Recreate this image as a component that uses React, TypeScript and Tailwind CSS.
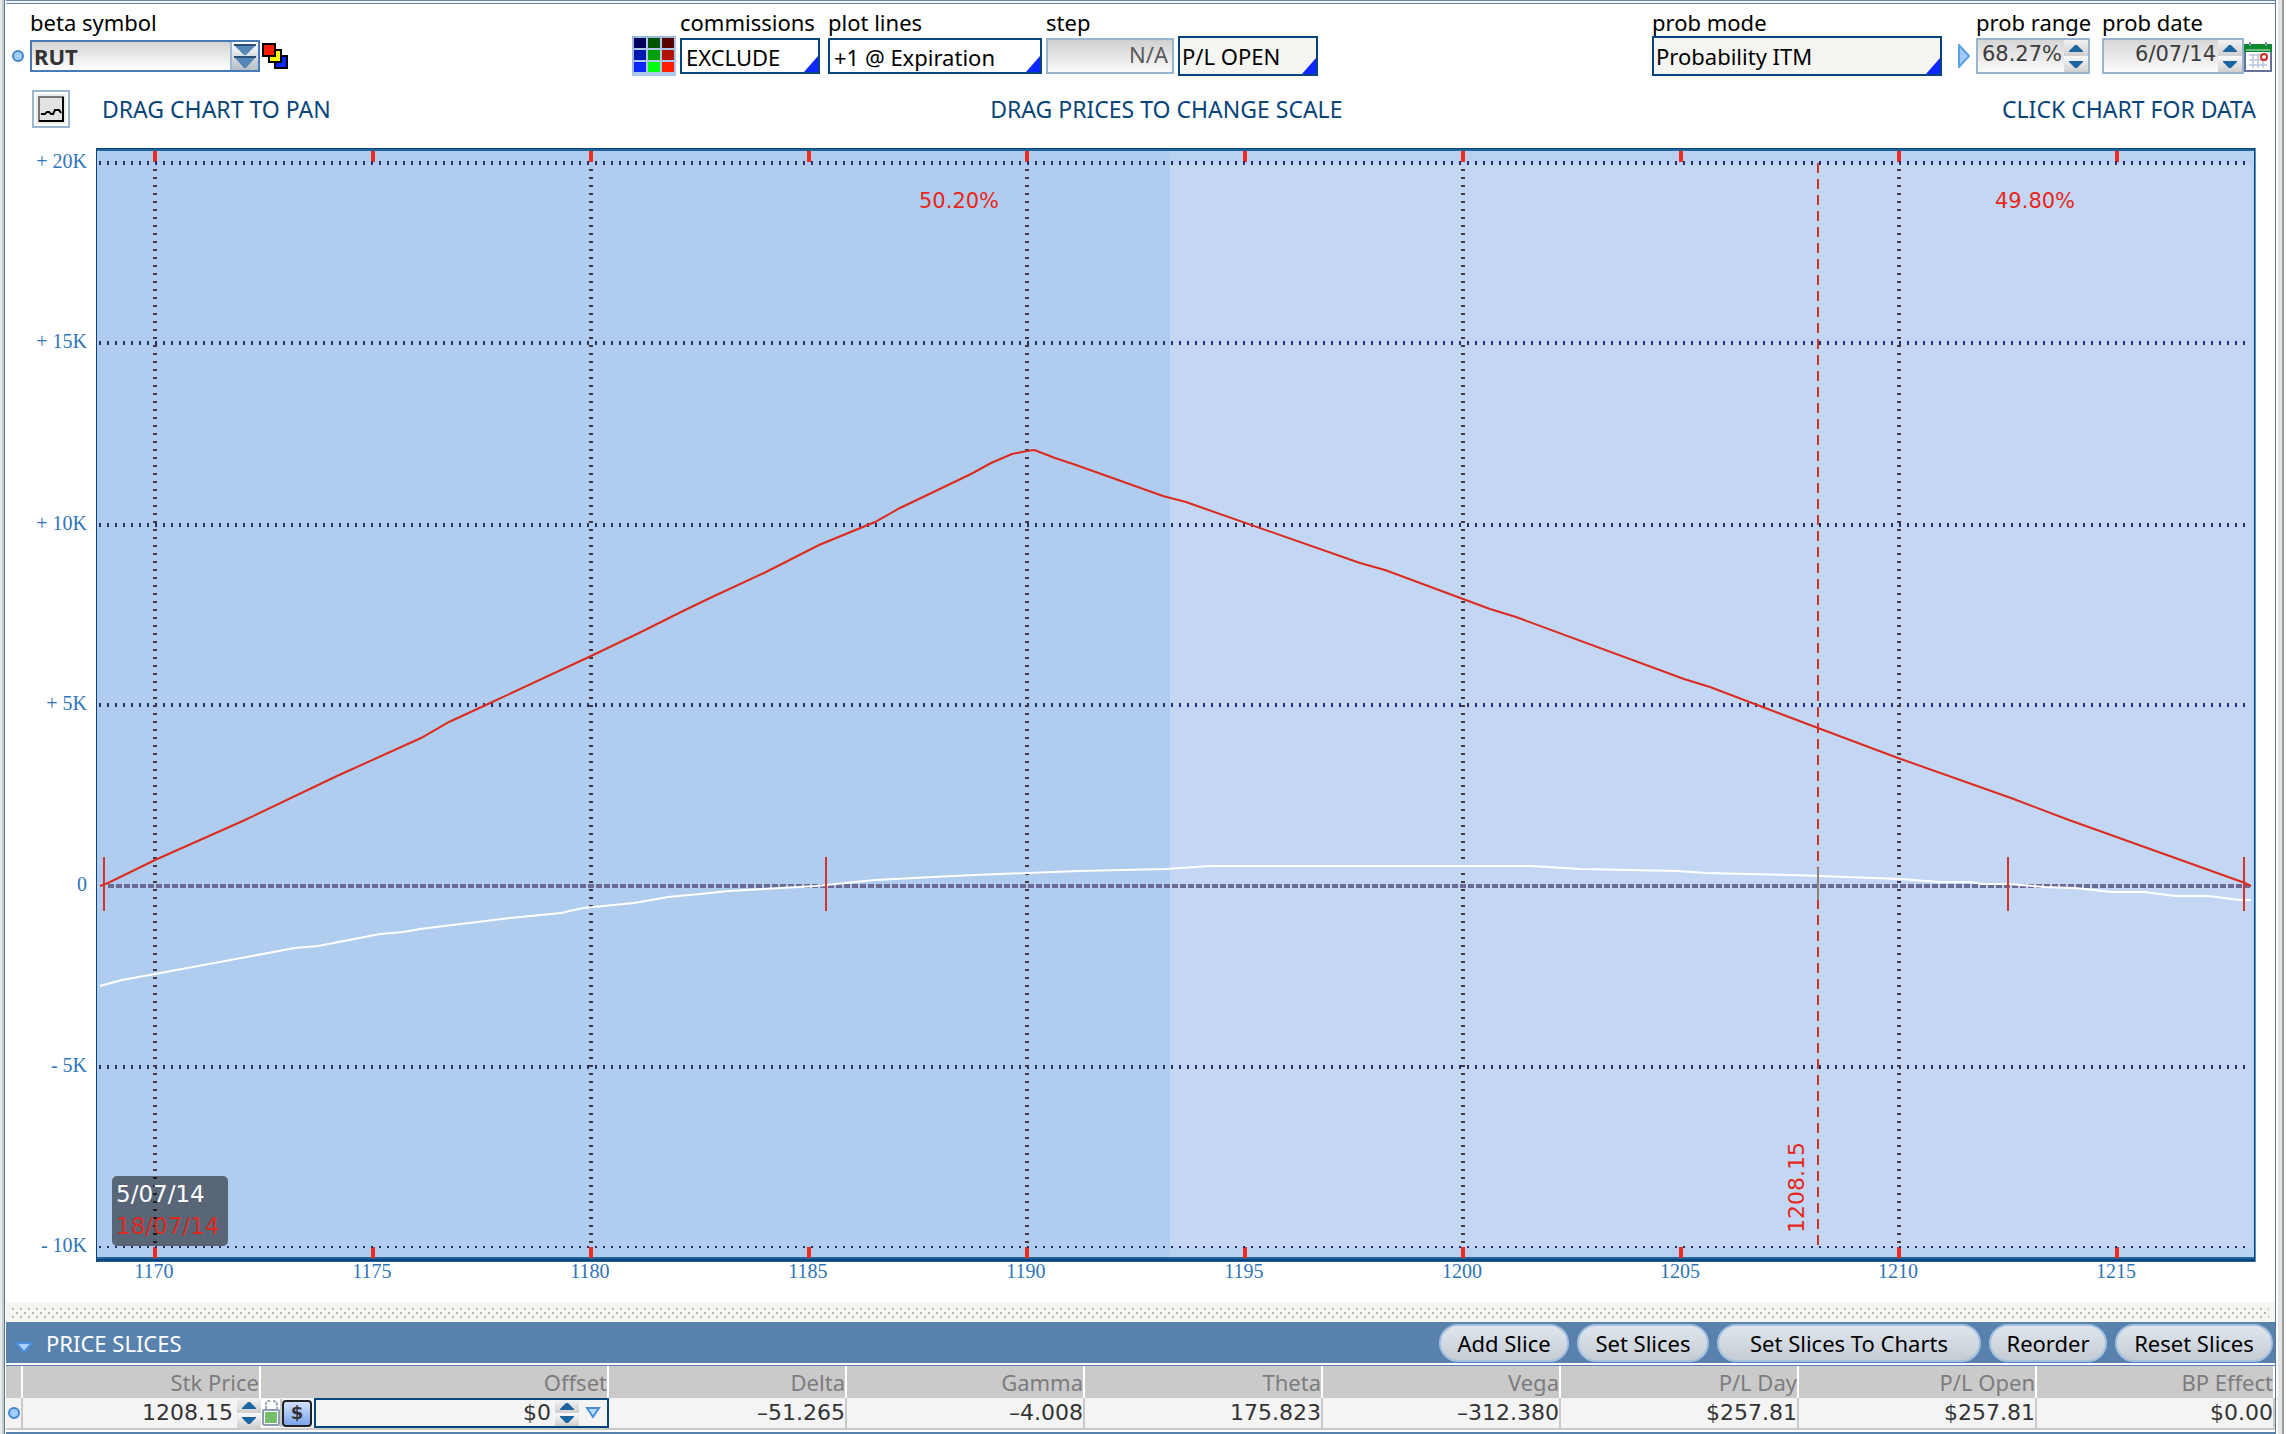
import { useState } from 'react';
import type { ReactNode } from 'react';

const yAxis = [
  { label: '+ 20K', y: 163 },
  { label: '+ 15K', y: 343 },
  { label: '+ 10K', y: 525 },
  { label: '+ 5K', y: 705 },
  { label: '0', y: 886 },
  { label: '- 5K', y: 1067 },
  { label: '- 10K', y: 1247 },
];

const xAxis = [1170, 1175, 1180, 1185, 1190, 1195, 1200, 1205, 1210, 1215];
const xOf = (price: number) => 155 + (price - 1170) * 43.6;

const expirationLine =
  '100,886 108,883 155,860 245,820 337,776 421,738 449,722 488,704 591,656 639,633 681,612 710,598 764,573 819,545 875,522 900,508 946,486 971,474 991,463 1012,454 1027,451 1034,450 1037,451 1055,458 1076,465 1163,496 1186,502 1200,507 1360,563 1385,570 1490,609 1516,617 1684,679 1710,687 1818,728 1898,758 2011,798 2069,820 2245,883 2251,886';
const todayLine =
  '100,986 122,980 155,974 295,948 318,946 380,934 403,932 420,929 510,918 561,913 583,908 634,903 668,897 700,894 729,891 816,886 875,880 933,877 974,875 1028,873 1079,871 1166,869 1210,866 1531,866 1580,869 1677,871 1706,873 1793,875 1900,879 1940,882 1971,882 1982,884 2008,884 2045,887 2075,888 2112,892 2144,892 2175,896 2208,896 2240,900 2251,900';

const breakevens = [104, 826, 2008, 2244];

const greeks = [
  { name: 'Delta', value: '–51.265' },
  { name: 'Gamma', value: '–4.008' },
  { name: 'Theta', value: '175.823' },
  { name: 'Vega', value: '–312.380' },
  { name: 'P/L Day', value: '$257.81' },
  { name: 'P/L Open', value: '$257.81' },
  { name: 'BP Effect', value: '$0.00' },
];

const sliceActions = [
  { label: 'Add Slice', width: 'w-[130px]' },
  { label: 'Set Slices', width: 'w-[132px]' },
  { label: 'Set Slices To Charts', width: 'w-[264px]' },
  { label: 'Reorder', width: 'w-[118px]' },
  { label: 'Reset Slices', width: 'w-[158px]' },
];

function Dot() {
  return <span className="block size-3 shrink-0 rounded-full border-2 border-[#3f86d0] bg-[#a3cdfb]" />;
}

function Field({ id, label, children }: { id: string; label: string; children: ReactNode }) {
  return (
    <div className="flex flex-col">
      <label htmlFor={id} className="h-7 w-0 whitespace-nowrap leading-7">
        {label}
      </label>
      <div className="flex h-10 items-center">{children}</div>
    </div>
  );
}

function CornerSelect({ id, value, className, label }: { id: string; value: string; className: string; label?: string }) {
  return (
    <div className="relative">
      <select
        id={id}
        aria-label={label}
        defaultValue={value}
        className={`block appearance-none border-2 border-[#08457a] text-black outline-none ${className}`}
      >
        <option>{value}</option>
      </select>
      <svg className="pointer-events-none absolute bottom-0.5 right-0.5" width="14" height="16" viewBox="0 0 14 16">
        <path d="M14 0V16H0Z" fill="#0a28ff" />
      </svg>
    </div>
  );
}

function Spinner({ name }: { name: string }) {
  return (
    <div className="flex h-full w-6 shrink-0 flex-col">
      <button aria-label={`Increase ${name}`} className="flex flex-1 items-center justify-center bg-linear-to-b from-[#f2f2f2] to-[#cfcfcf]">
        <svg width="14" height="7" viewBox="0 0 14 7">
          <path d="M6 0H8L14 6V7H0V6Z" fill="#1d65a0" />
        </svg>
      </button>
      <button aria-label={`Decrease ${name}`} className="flex flex-1 items-center justify-center bg-linear-to-b from-[#fafafa] to-[#cfcfcf]">
        <svg width="14" height="7" viewBox="0 0 14 7">
          <path d="M6 7H8L14 1V0H0V1Z" fill="#1d65a0" />
        </svg>
      </button>
    </div>
  );
}

function SpinField({ id, value, className }: { id: string; value: string; className: string }) {
  return (
    <div className={`flex h-9 border-2 border-[#9ab4d2] bg-linear-to-b from-[#d6d6d6] to-[#fbfbfb] ${className}`}>
      <input
        id={id}
        defaultValue={value}
        className="min-w-0 flex-1 pb-1 pr-0.5 text-right font-['DejaVu_Sans'] text-[21px] text-[#3c3c3c] outline-none"
      />
      <Spinner name={id} />
    </div>
  );
}

function PaletteIcon() {
  const cells = ['#00005a', '#005400', '#5a0000', '#0018b0', '#00a000', '#b01400', '#0a28ff', '#00ff10', '#ff2000'];
  return (
    <svg width="44" height="40" viewBox="0 0 44 40">
      <rect width="44" height="40" fill="#adc8ec" />
      <path d="M1 0V37M0 1H44" stroke="#8ea9cd" strokeWidth="1" />
      {cells.map((fill, i) => (
        <rect key={fill} x={2 + (i % 3) * 14} y={2 + Math.floor(i / 3) * 12} width="12" height="10" fill={fill} />
      ))}
    </svg>
  );
}

function CalendarIcon() {
  return (
    <svg width="28" height="30" viewBox="0 0 28 30">
      <rect x="1" y="7" width="26" height="22" fill="#fff" stroke="#68719e" strokeWidth="2" />
      <rect x="0" y="2" width="28" height="8" fill="#0a8a2c" />
      <path d="M2 8H26" stroke="#d7ecdc" strokeWidth="1" />
      <path d="M6 0V4M22 0V4" stroke="#8a8f9c" strokeWidth="2" />
      <path d="M5 13H23M5 18H23M5 23H23M9 12V26M14 12V26M19 12V26" stroke="#b9c3dc" strokeWidth="1.5" />
      <circle cx="20" cy="15" r="3" fill="#fff" stroke="#e0261c" strokeWidth="2" />
    </svg>
  );
}

function Toolbar() {
  return (
    <div className="flex items-start pt-1">
      <div className="flex w-[626px] shrink-0 items-start">
        <span className="w-6 pl-1.5 pt-[42px]">
          <Dot />
        </span>
        <Field id="symbol" label="beta symbol">
          <div className="flex h-8 w-[230px] border-2 border-[#467bb8] bg-linear-to-b from-[#d4d4d4] to-white">
            <input
              id="symbol"
              defaultValue="RUT"
              className="min-w-0 flex-1 pl-0.5 font-bold text-[#333] outline-none"
            />
            <button aria-label="Show symbols" className="w-7 shrink-0 border-l-2 border-[#9cb7d8] bg-linear-to-b from-white to-[#b8bec6]">
              <svg className="mx-auto" width="22" height="26" viewBox="0 0 22 26">
                <path d="M1 3H21L12 12H10Z M1 15H21L12 25H10Z" fill="#5587b8" />
                <path d="M0 2H22M0 14H22" stroke="#2c4f77" strokeWidth="2" />
              </svg>
            </button>
          </div>
          <svg className="ml-0.5" width="26" height="26" viewBox="0 0 26 26" stroke="#000" strokeWidth="2">
            <rect x="13" y="13" width="12" height="12" fill="#0a28ff" />
            <rect x="7" y="7" width="12" height="12" fill="#ff0" />
            <rect x="1" y="1" width="12" height="12" fill="#ff1e00" />
          </svg>
        </Field>
      </div>
      <button aria-label="Colors" className="mt-7 mr-1 shrink-0">
        <PaletteIcon />
      </button>
      <div className="flex gap-x-1">
        <div className="mr-1">
          <Field id="commissions" label="commissions">
            <CornerSelect id="commissions" value="EXCLUDE" className="h-9 w-[140px] bg-white pl-1 pt-0.5" />
          </Field>
        </div>
        <Field id="plot-lines" label="plot lines">
          <CornerSelect id="plot-lines" value="+1 @ Expiration" className="h-9 w-[214px] bg-white pl-1 pt-0.5" />
        </Field>
        <Field id="step" label="step">
          <input
            id="step"
            defaultValue="N/A"
            className="h-9 w-32 border-2 border-[#9ab4d2] bg-linear-to-b from-[#d0d0d0] to-[#fbfbfb] pr-1 pb-1 text-right text-[#5a5a5a] outline-none"
          />
        </Field>
        <div className="pt-7">
          <CornerSelect id="pl-mode" label="P/L mode" value="P/L OPEN" className="h-10 w-[140px] bg-[#f5f6f2] pl-0.5" />
        </div>
      </div>
      <div className="ml-auto flex items-start">
        <Field id="prob-mode" label="prob mode">
          <CornerSelect id="prob-mode" value="Probability ITM" className="h-10 w-[290px] bg-[#f5f6f2] pl-0.5" />
        </Field>
        <svg className="ml-4 mr-1.5 mt-9" width="12" height="24" viewBox="0 0 12 24">
          <path d="M1 1L11 12L1 23Z" fill="#9cccff" stroke="#5da0e6" strokeWidth="2" />
        </svg>
        <Field id="prob-range" label="prob range">
          <SpinField id="prob-range" value="68.27%" className="w-[114px]" />
        </Field>
        <div className="w-3" />
        <Field id="prob-date" label="prob date">
          <SpinField id="prob-date" value="6/07/14" className="w-[142px]" />
          <button aria-label="Pick date" className="mr-[3px] pt-0.5">
            <CalendarIcon />
          </button>
        </Field>
      </div>
    </div>
  );
}

function HintRow() {
  return (
    <div className="mt-3.5 flex items-center pl-[26px] pr-[19px] text-[23px] text-[#08457a]">
      <button aria-label="Chart settings" className="mr-8 flex size-[38px] items-center justify-center border-2 border-[#9ab4d2] bg-white">
        <svg width="30" height="30" viewBox="0 0 30 30">
          <rect width="30" height="30" fill="#ececec" />
          <rect x="3" y="3" width="24" height="24" fill="#e2e2e2" stroke="#777" strokeWidth="2" />
          <path d="M27 3V27H3" fill="none" stroke="#000" strokeWidth="2" />
          <path d="M5 20H9L11 18H13L15 20H17L19 16H23L25 19" fill="none" stroke="#000" strokeWidth="2" />
        </svg>
      </button>
      <div className="flex flex-1 justify-between">
        <span>DRAG CHART TO PAN</span>
        <span>DRAG PRICES TO CHANGE SCALE</span>
        <span>CLICK CHART FOR DATA</span>
      </div>
    </div>
  );
}

function RiskChart() {
  return (
    <svg viewBox="6 142 2269 1160" className="block w-full">
      <g shapeRendering="crispEdges">
        <rect x="96" y="148" width="2160" height="1114" fill="#b0cdf0" />
        <rect x="1170" y="151" width="1084" height="1106" fill="#b9d2f3" />
        <rect x="1170" y="163" width="1081" height="1084" fill="#c3d7f5" />
        <rect x="96" y="148" width="2160" height="3" fill="#1f659b" />
        <rect x="96" y="148" width="2160" height="1" fill="#08457a" />
        <rect x="96" y="1257" width="2160" height="5" fill="#1f659b" />
        <rect x="96" y="1259" width="2160" height="2" fill="#08457a" />
        <rect x="96" y="148" width="1" height="1114" fill="#08457a" />
        <rect x="2254" y="148" width="1" height="1114" fill="#08457a" />
        <rect x="2255" y="148" width="1" height="1114" fill="#5a8fbe" />

        {xAxis.map((price) => (
          <g key={price} fill="#f02a1c">
            <rect x={Math.round(xOf(price)) - 2} y="151" width="4" height="11" />
            <rect x={Math.round(xOf(price)) - 2} y="1247" width="4" height="11" />
          </g>
        ))}
        {yAxis.map(({ y, label }) =>
          label === '0' ? (
            <line key={y} x1="108" x2="2251" y1={y} y2={y} stroke="#6b6a94" strokeWidth="4" strokeDasharray="6 2" />
          ) : (
            <line key={y} x1="99" x2="2251" y1={y} y2={y} stroke="#27306a" strokeWidth={label === '- 10K' ? 2 : 4} strokeDasharray="2 6" />
          ),
        )}
        {xAxis
          .filter((price) => price % 10 === 0)
          .map((price) => (
            <line
              key={price}
              x1={Math.round(xOf(price))}
              x2={Math.round(xOf(price))}
              y1="169"
              y2="1247"
              stroke="#44383e"
              strokeWidth="4"
              strokeDasharray="2 6"
            />
          ))}
        <line x1="1818" x2="1818" y1="163" y2="1246" stroke="#d0342c" strokeWidth="2" strokeDasharray="10 6" />
      </g>

      <polyline points={todayLine} fill="none" stroke="#fff" strokeWidth="2" />
      <polyline points={expirationLine} fill="none" stroke="#dc2a1c" strokeWidth="2" />
      <line x1="1818" x2="1818" y1="868" y2="900" stroke="#8c8478" strokeWidth="2" />
      {breakevens.map((x) => (
        <line key={x} x1={x} x2={x} y1="857" y2="911" stroke="#d0342c" strokeWidth="2" />
      ))}

      <g className="fill-[#e8261a] font-['DejaVu_Sans'] text-[21px]">
        <text x="919" y="208">50.20%</text>
        <text x="1995" y="208">49.80%</text>
      </g>
      <text transform="translate(1804 1233) rotate(-90)" className="fill-[#e8261a] font-['DejaVu_Sans'] text-[22px]">
        1208.15
      </text>

      <rect x="112" y="1176" width="116" height="70" rx="5" fill="#000" fillOpacity="0.5" />
      <g className="font-['DejaVu_Sans'] text-[23px]">
        <text x="116" y="1202" fill="#fff">5/07/14</text>
        <text x="116" y="1234" fill="#dc2a1c">18/07/14</text>
      </g>

      <g className="fill-[#2f74b8] font-['Liberation_Serif'] text-[20px]">
        {yAxis.map(({ label, y }) => (
          <text key={y} x="87" y={y + 5} textAnchor="end">
            {label}
          </text>
        ))}
        {xAxis.map((price) => (
          <text key={price} x={xOf(price) - 1} y="1278" textAnchor="middle">
            {price}
          </text>
        ))}
      </g>
    </svg>
  );
}

function Splitter() {
  return (
    <div className="h-5 bg-[#f5f5f1] px-1.5 pt-1.5">
      <svg className="block h-3 w-full">
        <pattern id="grip" width="8" height="8" patternUnits="userSpaceOnUse">
          <rect width="2" height="2" fill="#b4b4b4" />
          <rect x="4" y="4" width="2" height="2" fill="#b4b4b4" />
          <rect x="2" y="2" width="1" height="1" fill="#fff" />
          <rect x="6" y="6" width="1" height="1" fill="#fff" />
        </pattern>
        <rect width="100%" height="100%" fill="url(#grip)" />
      </svg>
    </div>
  );
}

function SlicesHeader({ open, onToggle }: { open: boolean; onToggle: () => void }) {
  return (
    <div className="flex h-[41px] items-center bg-[#5882ad]">
      <button onClick={onToggle} aria-expanded={open} className="flex items-center gap-3 pl-2 text-white">
        <svg className="mt-2" width="20" height="12" viewBox="0 0 20 12">
          <path d="M2 2H18L10 11Z" fill="#a8d2ff" stroke="#4a8fdc" strokeWidth="2" />
        </svg>
        PRICE SLICES
      </button>
      <div className="ml-auto flex gap-2 pr-0.5">
        {sliceActions.map(({ label, width }) => (
          <button
            key={label}
            className={`h-[38px] whitespace-nowrap rounded-full border-2 border-[#a3c0e0] bg-linear-to-b from-[#dfe6ee] to-[#c5ccd4] text-black ${width}`}
          >
            {label}
          </button>
        ))}
      </div>
    </div>
  );
}

function SlicesTable() {
  return (
    <table className="w-full table-fixed border-separate border-spacing-0 text-right">
      <colgroup>
        <col className="w-[17px]" />
        <col className="w-[238px]" />
        <col className="w-[348px]" />
        {greeks.map(({ name }) => (
          <col key={name} />
        ))}
      </colgroup>
      <thead>
        <tr className="h-8 bg-[#cacaca] text-[#7d7d7d]">
          {['', 'Stk Price', 'Offset', ...greeks.map((g) => g.name)].map((name, i) => (
            <th key={i} className="border-r-2 border-white p-0 text-right font-normal leading-8">
              {name}
            </th>
          ))}
        </tr>
      </thead>
      <tbody>
        <tr className="h-8 bg-[#f4f4f4] font-['DejaVu_Sans'] text-[#333]">
          <td className="border-b-2 border-r-2 border-[#cacaca] p-0 pl-0.5">
            <Dot />
          </td>
          <td className="border-b-2 border-[#cacaca] p-0">
            <div className="flex h-[30px]">
              <input aria-label="Stk Price" defaultValue="1208.15" className="mr-1 min-w-0 flex-1 text-right outline-none" />
              <Spinner name="stock price" />
            </div>
          </td>
          <td className="border-b-2 border-[#cacaca] p-0">
            <div className="flex h-[30px] items-center">
              <button aria-label="Unlock" className="w-[21px] shrink-0 border-r-2 border-[#cacaca] bg-white">
                <svg width="20" height="28" viewBox="0 0 20 28">
                  <path d="M5 10V5Q5 2 8 2H10M12 2Q16 2 16 6V10" fill="none" stroke="#9fa8ba" strokeWidth="2" strokeDasharray="3 1" />
                  <rect x="2" y="11" width="16" height="15" rx="1" fill="#fff" stroke="#8f9bb2" strokeWidth="2" />
                  <rect x="4" y="13" width="12" height="11" fill="#76bd6a" />
                </svg>
              </button>
              <button
                aria-label="Dollar offset"
                className="flex h-[27px] w-[30px] shrink-0 items-center justify-center rounded-sm border-2 border-[#222] bg-linear-to-b from-[#d2e0fa] to-[#7ba4ee] font-bold text-lg"
              >
                $
              </button>
              <div className="ml-0.5 flex h-[30px] min-w-0 flex-1 items-center border-2 border-[#08457a]">
                <input aria-label="Offset" defaultValue="$0" className="mr-1 min-w-0 flex-1 text-right outline-none" />
                <Spinner name="offset" />
                <svg className="mx-1.5" width="16" height="14" viewBox="0 0 16 14">
                  <path d="M2 2H14L8 11Z" fill="#bcdcff" stroke="#4a8fdc" strokeWidth="2" />
                </svg>
              </div>
            </div>
          </td>
          {greeks.map(({ name, value }) => (
            <td key={name} className="border-b-2 border-r-2 border-[#cacaca] p-0">
              {value}
            </td>
          ))}
        </tr>
      </tbody>
    </table>
  );
}

export default function App() {
  const [open, setOpen] = useState(true);

  return (
    <div className="flex min-h-screen bg-white font-['Noto_Sans',sans-serif] text-[22px] leading-7 text-black">
      <div className="w-[5px] shrink-0 border-l-2 border-r border-l-[#e9eaea] border-r-[#567b9f] bg-[#c6caca]" />
      <main className="ml-px flex min-w-0 flex-1 flex-col">
        <div className="h-1 border-y border-[#6a82ad] bg-[#f2f5fa]" />
        <Toolbar />
        <HintRow />
        <div className="mt-3.5">
          <RiskChart />
        </div>
        <Splitter />
        <SlicesHeader open={open} onToggle={() => setOpen(!open)} />
        <div className="mt-0.5 border-t border-[#5882ad]">{open && <SlicesTable />}</div>
        <div className="mt-0.5 h-0.5 bg-[#5882ad]" />
      </main>
      <div className="w-[11px] shrink-0 border-l border-[#567b9f] pl-0.5">
        <div className="h-full w-1.5 border-r-2 border-[#9a9a9a] bg-[#e4e4e4]" />
      </div>
    </div>
  );
}
